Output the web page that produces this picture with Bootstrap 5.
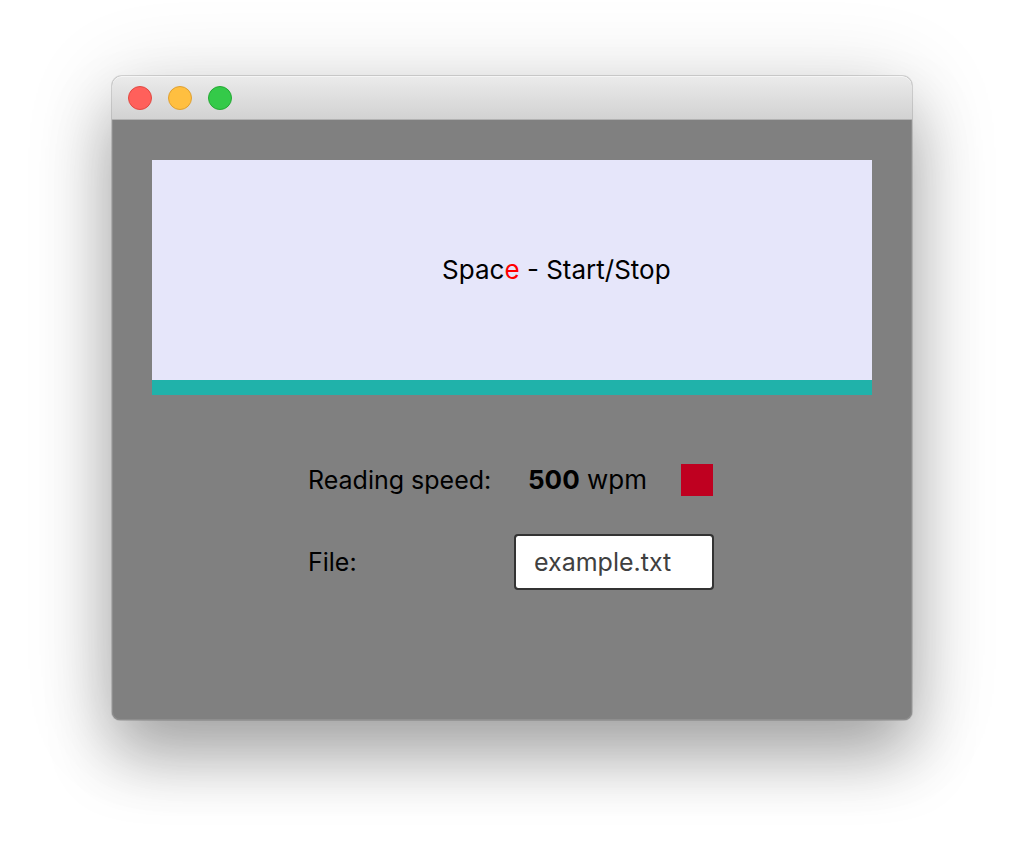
<!DOCTYPE html>
<html lang="en">
<head>
<meta charset="utf-8">
<meta name="viewport" content="width=device-width, initial-scale=1">
<title>Speed reader</title>
<link rel="stylesheet" href="https://cdn.jsdelivr.net/npm/bootstrap@5.3.0/dist/css/bootstrap.min.css">
<style>
  body { font-family: Inter, "Liberation Sans", sans-serif; font-size: 25px; line-height: 32px; color: #000; background: #fff; }
  .desktop { padding: 76px 112px; }
  .app-window {
    min-height: 644px; background: #808080; border-radius: 10px 10px 8px 8px;
    box-shadow: inset 0 0 0 1px #8e8e8e, 0 0 0 1px rgba(0,0,0,.14), 0 38px 64px rgba(0,0,0,.28), 0 10px 90px rgba(0,0,0,.16);
  }
  .title-bar {
    height: 44px; gap: 16px; padding: 0 16px; border-radius: 10px 10px 0 0;
    background: linear-gradient(#ebebeb, #d2d2d2); border-bottom: 1px solid #b2b2b2;
    box-shadow: inset 0 1px #f5f5f5;
  }
  .window-dot { width: 24px; height: 24px; padding: 0; border: 1px solid; border-radius: 50%; }
  .dot-close { background: #ff605b; border-color: #e14942; }
  .dot-minimize { background: #ffbf40; border-color: #dfa032; }
  .dot-zoom { background: #34ca49; border-color: #25a934; }
  .app-content { padding: 40px; }
  .reader { display: grid; grid-template-columns: 1fr auto 1fr; align-items: center; height: 220px; font-size: 26px; background: #e6e6fa; white-space: pre; }
  .pivot { color: #f00; }
  .reading-progress { height: 15px; border-radius: 0; background: #20b2aa; }
  .reading-progress .progress-bar { background: #20b2aa; }
  .settings { display: grid; grid-template-columns: 186px 200px; column-gap: 20px; row-gap: 38px; align-items: center; width: fit-content; margin: 69px auto 0; padding-right: 2px; white-space: nowrap; }
  .speed-row { padding: 0 1px 0 14px; }
  .speed-value { font-size: 26px; }
  .stop-square { width: 32px; height: 32px; padding: 0; border: 0; border-radius: 0; background: #bf0020; }
  .file-field { height: 56px; padding: 0 18px; border: 2px solid #333; border-radius: 4px; font-size: 25px; color: #404040; }
</style>
</head>
<body>
<div class="desktop min-vh-100">
  <main class="app-window">
    <header class="title-bar d-flex align-items-center">
      <button type="button" class="window-dot dot-close" aria-label="Close"></button>
      <button type="button" class="window-dot dot-minimize" aria-label="Minimize"></button>
      <button type="button" class="window-dot dot-zoom" aria-label="Zoom"></button>
    </header>
    <div class="app-content">
      <div class="reader"><span class="text-end">Spac</span><span class="pivot">e</span><span> - Start/Stop</span></div>
      <div class="progress reading-progress" role="progressbar" aria-label="Progress" aria-valuenow="100" aria-valuemin="0" aria-valuemax="100">
        <div class="progress-bar w-100"></div>
      </div>
      <form class="settings">
        <label for="speed">Reading speed:</label>
        <div class="speed-row d-flex align-items-center justify-content-between">
          <output id="speed" class="speed-value"><b>500</b> wpm</output>
          <button type="button" class="stop-square" aria-label="Stop"></button>
        </div>
        <label for="file">File:</label>
        <input id="file" type="text" class="form-control file-field" value="example.txt">
      </form>
    </div>
  </main>
</div>
<script src="https://cdn.jsdelivr.net/npm/bootstrap@5.3.0/dist/js/bootstrap.bundle.min.js"></script>
</body>
</html>
